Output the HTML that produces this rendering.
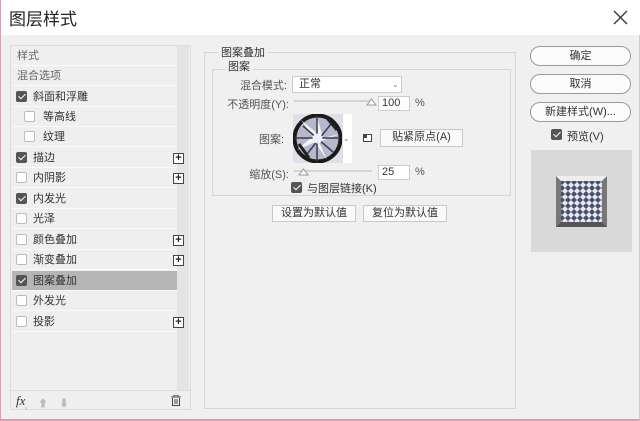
<!DOCTYPE html>
<html><head><meta charset="utf-8"><style>
*{box-sizing:border-box;margin:0;padding:0}
body{width:640px;height:421px;background:#f0f0f0;font-family:"Liberation Sans","Noto Sans CJK SC",sans-serif;font-size:11px;color:#333;position:relative;overflow:hidden;border-left:1px solid #d8a0b4;border-bottom:2px solid #d8a0b4;border-right:1px solid #e8c0cc}
.a{position:absolute}
.title{left:0;top:0;width:640px;height:35px;background:#fff}
.title span{position:absolute;left:8px;top:5px;font-size:17px;color:#222}
.cb{position:absolute;width:11px;height:11px;border:1px solid #bbb;background:#fff;border-radius:2px}
.cb.on{background:#555;border-color:#555}
.cb.on::after{content:"";position:absolute;left:3px;top:0px;width:3px;height:6px;border:solid #fff;border-width:0 1.5px 1.5px 0;transform:rotate(45deg)}
.row{position:absolute;left:11px;width:165px;height:20px;border-bottom:1px solid #fafafa;line-height:20px}
.plus{position:absolute;left:161px;top:5px;width:11px;height:11px;border:1px solid #444;font-size:11px;line-height:8px;text-align:center;font-weight:bold;color:#222;background:#fff}
.btn{position:absolute;background:#fafafa;border:1px solid #c8c8c8;text-align:center;line-height:15px;font-size:11px}
.rb{position:absolute;left:529px;width:101px;height:20px;border:1px solid #9a9a9a;border-radius:10px;background:#fbfbfb;text-align:center;line-height:18px;font-size:11px}
.inp{position:absolute;background:#fff;border:1px solid #ccc;height:15px;line-height:13px;padding-left:3px}
</style></head><body>
<div class="a title"><span>图层样式</span>
<svg class="a" style="left:612px;top:10px" width="15" height="15"><path d="M1 1L14 14M14 1L1 14" stroke="#333" stroke-width="1.3"/></svg></div>

<div class="a" style="left:9px;top:45px;width:181px;height:365px;border:1px solid #dcdcdc;background:#efefef"></div>
<div class="a" style="left:176px;top:46px;width:12px;height:344px;background:#e4e4e4"></div>
<div class="row" style="top:46px;color:#666;padding-left:5px">样式</div>
<div class="row" style="top:66px;color:#666;padding-left:5px">混合选项</div>
<div class="row" style="top:87px"><div class="cb on" style="left:4px;top:4px"></div><span class="a" style="left:21px">斜面和浮雕</span></div>
<div class="row" style="top:107px"><div class="cb" style="left:12px;top:4px"></div><span class="a" style="left:31px">等高线</span></div>
<div class="row" style="top:127px"><div class="cb" style="left:12px;top:4px"></div><span class="a" style="left:31px">纹理</span></div>
<div class="row" style="top:148px"><div class="cb on" style="left:4px;top:4px"></div><span class="a" style="left:21px">描边</span><div class="plus">+</div></div>
<div class="row" style="top:168px"><div class="cb" style="left:4px;top:4px"></div><span class="a" style="left:21px">内阴影</span><div class="plus">+</div></div>
<div class="row" style="top:189px"><div class="cb on" style="left:4px;top:4px"></div><span class="a" style="left:21px">内发光</span></div>
<div class="row" style="top:209px"><div class="cb" style="left:4px;top:4px"></div><span class="a" style="left:21px">光泽</span></div>
<div class="row" style="top:230px"><div class="cb" style="left:4px;top:4px"></div><span class="a" style="left:21px">颜色叠加</span><div class="plus">+</div></div>
<div class="row" style="top:250px"><div class="cb" style="left:4px;top:4px"></div><span class="a" style="left:21px">渐变叠加</span><div class="plus">+</div></div>
<div class="row" style="top:271px;background:#b5b5b5"><div class="cb on" style="left:4px;top:4px"></div><span class="a" style="left:21px">图案叠加</span></div>
<div class="row" style="top:291px"><div class="cb" style="left:4px;top:4px"></div><span class="a" style="left:21px">外发光</span></div>
<div class="row" style="top:312px"><div class="cb" style="left:4px;top:4px"></div><span class="a" style="left:21px">投影</span><div class="plus">+</div></div>
<div class="a" style="left:10px;top:390px;width:179px;height:1px;background:#ddd"></div>
<div class="a" style="left:15px;top:393px;font-style:italic;font-family:'Liberation Serif',serif;font-size:13px">fx<sub style="font-size:7px">.</sub></div>
<div class="a" style="left:37px;top:395px;color:#bbb;font-size:10px">⬆</div>
<div class="a" style="left:58px;top:395px;color:#bbb;font-size:10px">⬇</div>
<svg class="a" style="left:170px;top:395px" width="10" height="11"><path d="M0 2H10M3 2V0H7V2M1.5 3V10.5H8.5V3M4 4V9M6 4V9" stroke="#444" fill="none"/></svg>

<div class="a" style="left:203px;top:52px;width:312px;height:357px;border:1px solid #d6d6d6"></div>
<div class="a" style="left:217px;top:44px;background:#f0f0f0;padding:0 3px;font-size:11px">图案叠加</div>
<div class="a" style="left:211px;top:69px;width:299px;height:127px;border:1px solid #d6d6d6"></div>
<div class="a" style="left:224px;top:58px;background:#f0f0f0;padding:0 3px">图案</div>
<div class="a" style="left:236px;top:77px;width:50px;text-align:right;color:#555">混合模式:</div>
<div class="a" style="left:291px;top:76px;width:110px;height:17px;background:#fff;border:1px solid #ccc;padding-left:6px;line-height:15px">正常<span class="a" style="left:99px;top:0;font-size:8px;color:#888">⌄</span></div>
<div class="a" style="left:220px;top:96px;width:68px;text-align:right;color:#555">不透明度(Y):</div>
<div class="a" style="left:293px;top:100px;width:78px;height:2px;background:#d4d4d4"></div>
<svg class="a" style="left:365px;top:97px" width="11" height="9"><path d="M1 8L5.5 2L10 8Z" fill="#fff" stroke="#999"/></svg>
<div class="inp" style="left:377px;top:96px;width:32px">100</div>
<div class="a" style="left:414px;top:97px;color:#555">%</div>
<div class="a" style="left:258px;top:131px;color:#555">图案:</div>
<svg class="a" style="left:292px;top:114px" width="49" height="49"><rect width="49" height="49" fill="#dfe0e8"/><circle cx="24.5" cy="24.5" r="23" fill="#b8b8cc" stroke="#1a1a1a" stroke-width="4"/><path d="M24 2L30 24L47 20L26 28L34 46L22 28L4 36L20 22L8 6L25 20Z" fill="#fff" opacity=".85"/><path d="M10 12L40 38M38 10L14 40M2 24H47M24 2V47" stroke="#3a3a50" stroke-width="1.5"/><path d="M6 30L16 44M34 4L44 16" stroke="#222" stroke-width="3"/><circle cx="24.5" cy="24.5" r="5" fill="#eef"/></svg>
<div class="a" style="left:341px;top:114px;width:10px;height:49px;background:#fff;border-left:1px solid #ddd"></div>
<div class="a" style="left:342px;top:134px;font-size:8px;color:#888">⌄</div>
<svg class="a" style="left:362px;top:134px" width="9" height="8"><rect x="0.5" y="0.5" width="8" height="7" fill="#fff" stroke="#444"/><rect x="0" y="0" width="4" height="4" fill="#444"/></svg>
<div class="btn" style="left:379px;top:129px;width:83px;height:18px">贴紧原点(A)</div>
<div class="a" style="left:244px;top:166px;width:44px;text-align:right;color:#555">缩放(S):</div>
<div class="a" style="left:293px;top:170px;width:78px;height:2px;background:#d4d4d4"></div>
<svg class="a" style="left:297px;top:167px" width="11" height="9"><path d="M1 8L5.5 2L10 8Z" fill="#fff" stroke="#999"/></svg>
<div class="inp" style="left:377px;top:165px;width:32px">25</div>
<div class="a" style="left:414px;top:166px;color:#555">%</div>
<div class="cb on" style="left:290px;top:182px"></div>
<div class="a" style="left:306px;top:180px">与图层链接(K)</div>
<div class="btn" style="left:271px;top:205px;width:84px;height:17px">设置为默认值</div>
<div class="btn" style="left:362px;top:205px;width:84px;height:17px">复位为默认值</div>

<div class="rb" style="top:46px">确定</div>
<div class="rb" style="top:74px">取消</div>
<div class="rb" style="top:102px">新建样式(W)...</div>
<div class="cb on" style="left:550px;top:129px"></div>
<div class="a" style="left:566px;top:128px">预览(V)</div>
<div class="a" style="left:530px;top:150px;width:101px;height:102px;background:#d9d9d9"></div>
<svg class="a" style="left:555px;top:176px" width="51" height="51"><defs><pattern id="p" width="6" height="6" patternUnits="userSpaceOnUse"><rect width="6" height="6" fill="#4a4f6a"/><path d="M0 3L3 0L6 3L3 6Z" fill="#e6e8f4"/></pattern></defs><rect width="51" height="51" fill="#777"/><path d="M0 0H51L46 5H5Z" fill="#eee"/><path d="M0 51H51L46 46H5Z" fill="#555"/><rect x="5" y="5" width="41" height="41" fill="url(#p)"/></svg>
</body></html>
